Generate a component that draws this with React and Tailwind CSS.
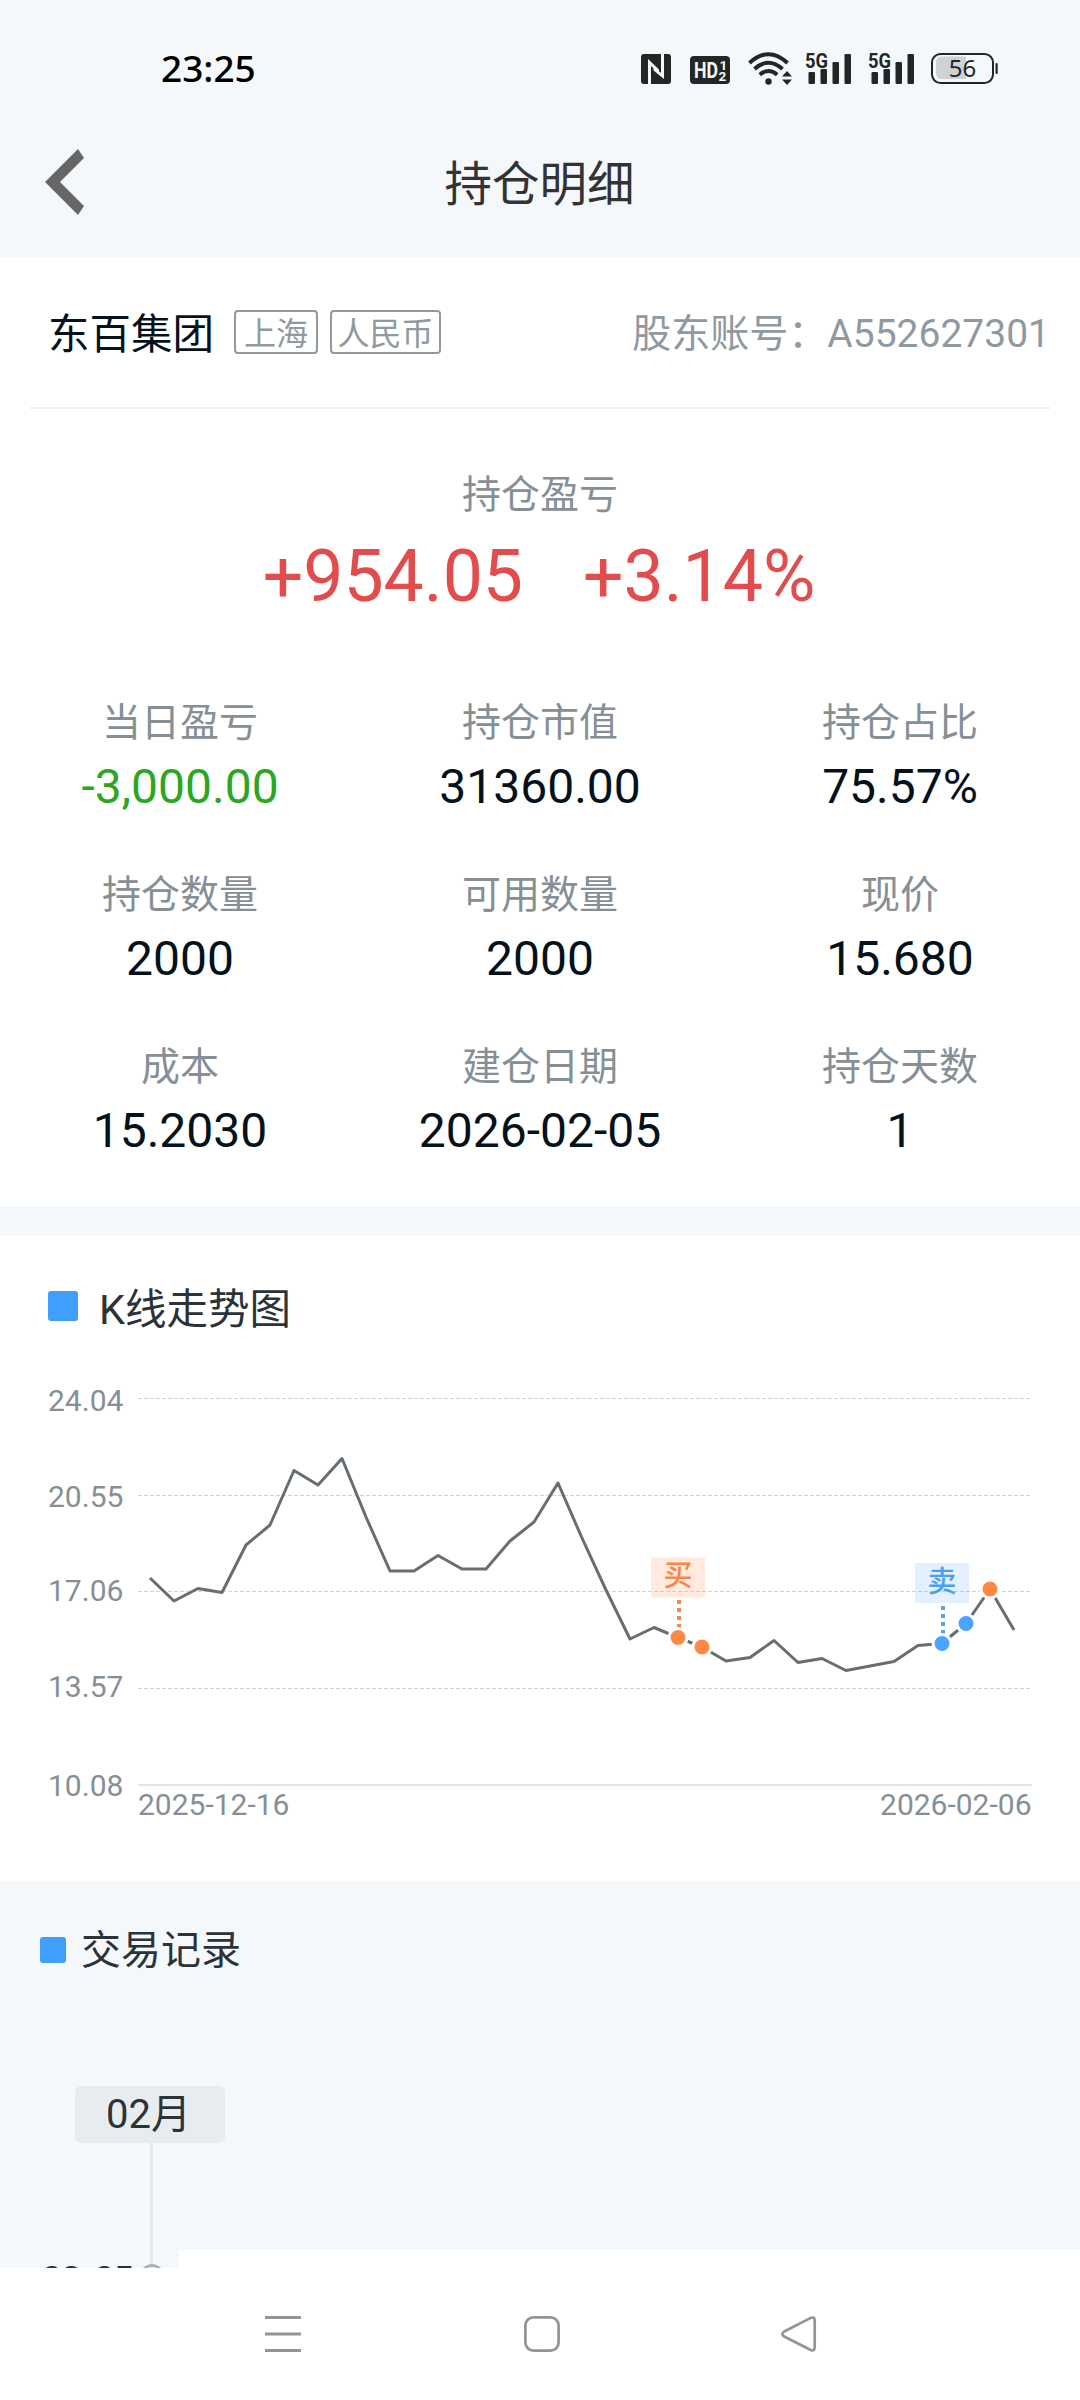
import React from 'react';

const stats = [
    { label: '当日盈亏', value: '-3,000.00', green: true },
    { label: '持仓市值', value: '31360.00' },
    { label: '持仓占比', value: '75.57%' },
    { label: '持仓数量', value: '2000' },
    { label: '可用数量', value: '2000' },
    { label: '现价', value: '15.680' },
    { label: '成本', value: '15.2030' },
    { label: '建仓日期', value: '2026-02-05' },
    { label: '持仓天数', value: '1' },
];

// y is the grid line, text is the label's baseline
const axis = [
    { label: '24.04', y: 28.5, text: 41 },
    { label: '20.55', y: 125.5, text: 137 },
    { label: '17.06', y: 221.5, text: 231 },
    { label: '13.57', y: 318.5, text: 327 },
    { label: '10.08', y: 415, text: 426 },
];

const closes = [
    208, 231, 218.5, 222.5, 175, 155, 100.5, 115, 88.5, 147, 201, 201, 185.5, 199, 199, 171, 152,
    113, 168, 220, 269, 257.5, 267.5, 277, 291, 287.5, 270.5, 292.5, 288.5, 300.5, 296, 291.5,
    275.5, 273.5, 253.5, 219, 260,
];

const pointX = (i) => 150 + i * 24;

const trades = [
    { i: 22, color: '#ff8844' },
    { i: 23, color: '#ff8844' },
    { i: 33, color: '#4aa3ff' },
    { i: 34, color: '#4aa3ff' },
    { i: 35, color: '#ff8844' },
];

const Signal = () => (
    <svg className="overflow-visible" width="47" height="34" viewBox="0 0 47 34" fill="#232625">
        <text x="0" y="16.5" fontSize="21" fontWeight="700" textLength="23" lengthAdjust="spacingAndGlyphs" className="font-['Roboto',sans-serif]">5G</text>
        <rect x="3.5" y="21" width="6.5" height="12" rx="1.2" />
        <rect x="15.5" y="18" width="6.5" height="15" rx="1.2" />
        <rect x="27.5" y="11" width="6.5" height="22" rx="1.2" />
        <rect x="39.5" y="3" width="6.5" height="30" rx="1.2" />
    </svg>
);

const StatusBar = () => (
    <div className="flex h-[110px] items-start justify-between pl-[161px] pr-[82px]">
        <span className="mt-[42px] font-['Noto_Sans',sans-serif] text-[37px] leading-[52px] font-medium text-black">23:25</span>
        <div className="mt-[52px] flex items-start">
            {/* NFC */}
            <svg className="mt-[2px]" width="30" height="30" viewBox="0 0 30 30">
                <rect width="30" height="30" rx="3" fill="#232625" />
                <path d="M7 30V5L18 15.500V19.500L10 12V30Z" fill="#f4f8fb" />
                <path d="M23 0V25L12.500 16.500V12.500L20 19V0Z" fill="#f4f8fb" />
            </svg>
            {/* HD */}
            <svg className="ml-[19px] mt-[4px]" width="40" height="28" viewBox="0 0 40 28">
                <rect width="40" height="28" rx="4" fill="#232625" />
                <g fill="#f4f8fb" fontWeight="700" className="font-['Roboto',sans-serif]">
                    <text x="4" y="21.5" fontSize="21.5" textLength="24" lengthAdjust="spacingAndGlyphs">HD</text>
                    <text x="29.5" y="13.5" fontSize="13.5">1</text>
                    <text x="28.5" y="24.8" fontSize="13.5">2</text>
                </g>
            </svg>
            {/* Wifi */}
            <svg className="ml-[18px]" width="44" height="33" viewBox="0 0 44 33">
                <g fill="none" stroke="#232625" strokeWidth="4">
                    <path d="M1.5 11Q20.5 -6.5 39.5 11" />
                    <path d="M6.5 17Q20.5 4.5 34.5 17" />
                    <path d="M11.8 22.7Q20.5 15.4 29.2 22.7" />
                </g>
                <circle cx="20.5" cy="29.5" r="3.2" fill="#232625" />
                <path d="M34 24.5L39 19L44 24.5ZM34 27.5L39 33L44 27.5Z" fill="#232625" />
            </svg>
            <div className="-mt-px ml-[13px] flex gap-4">
                <Signal />
                <Signal />
            </div>
            <svg className="ml-[16px]" width="67" height="33" viewBox="0 0 67 33">
                <path d="M35 4.5V27H11Q5 27 5 21V10.5Q5 4.500 11 4.5Z" fill="#cfd2d4" />
                <rect x="1" y="2" width="61" height="29" rx="8.5" fill="none" stroke="#232625" strokeWidth="2" />
                <rect x="64.5" y="11" width="2.2" height="11" rx="1" fill="#232625" />
                <text x="31.5" y="25" fontSize="24" textAnchor="middle" fill="#232625" className="font-['Noto_Sans',sans-serif]">56</text>
            </svg>
        </div>
    </div>
);

const Chart = () => (
    <svg className="block" width="1080" height="460" viewBox="0 0 1080 460">
        {axis.map((a, i) => (
            <g key={a.label}>
                <text x="48" y={a.text} fontSize="30" fill="#868f96">{a.label}</text>
                {i < 4 ? (
                    <line x1="138" x2="1030" y1={a.y} y2={a.y} stroke="#d0d5d8" strokeDasharray="4 2" />
                ) : (
                    <line x1="138" x2="1032" y1={a.y} y2={a.y} stroke="#e2e6eb" strokeWidth="2" />
                )}
            </g>
        ))}
        <text x="138" y="445" fontSize="30" fill="#868f96">2025-12-16</text>
        <text x="1031.5" y="445" fontSize="30" fill="#868f96" textAnchor="end">2026-02-06</text>

        <polyline
            points={closes.map((y, i) => `${pointX(i)},${y}`).join(' ')}
            fill="none"
            stroke="#666e74"
            strokeWidth="3"
            strokeLinejoin="round"
        />

        {/* Buy / sell flags */}
        <rect x="651" y="187.5" width="54" height="40" fill="#ff8844" fillOpacity="0.18" />
        <text x="678" y="216" fontSize="29" fontWeight="500" fill="#f5874a" textAnchor="middle">买</text>
        <line x1="679" x2="679" y1="230" y2="259" stroke="#f08a50" strokeWidth="4" strokeDasharray="4 4" />
        <rect x="915" y="193" width="54" height="40" fill="#4aa3ff" fillOpacity="0.16" />
        <text x="942" y="222" fontSize="29" fontWeight="500" fill="#4aa0f0" textAnchor="middle">卖</text>
        <line x1="943" x2="943" y1="236" y2="265" stroke="#55a5ea" strokeWidth="4" strokeDasharray="4 4" />

        {trades.map((t) => (
            <circle key={t.i} cx={pointX(t.i)} cy={closes[t.i]} r="9" fill={t.color} stroke="#ffffff" strokeWidth="3" />
        ))}
    </svg>
);

const App = () => {
    return (
        <div className="flex h-[2400px] w-[1080px] flex-col overflow-hidden bg-[#f4f8fb] font-['Roboto','Noto_Sans_CJK_SC',sans-serif]">
            <StatusBar />
            <header className="grid h-[147px] grid-cols-3 items-center pb-[3px]">
                <svg className="ml-[45px]" width="40" height="66" viewBox="0 0 40 66">
                    <path d="M33 0L0 33L33 66L39 57L15 33L39 9Z" fill="#666666" />
                </svg>
                <h1 className="pt-[5px] pr-px text-center text-[47.5px] leading-[66px] text-[#333333]">持仓明细</h1>
            </header>

            <section className="h-[949px] shrink-0 bg-white">
                <div className="mx-[30px] flex h-[152px] items-center border-b-2 border-[#edf0f1] pl-[18px]">
                    <span className="pt-[6px] text-[41.5px] leading-[60px] text-[#05121b]">东百集团</span>
                    <span className="ml-[20px] flex h-[44px] w-[84px] items-center justify-center rounded border-2 border-[#8f999f] pt-1 text-[32px] text-[#8f999f]">上海</span>
                    <span className="ml-[12px] flex h-[44px] w-[111px] items-center justify-center rounded border-2 border-[#8f999f] pt-1 text-[32px] whitespace-nowrap text-[#8f999f]">人民币</span>
                    <span className="ml-auto pt-[5px] text-[39px] whitespace-nowrap text-[#8f999f]">股东账号：A552627301</span>
                </div>

                <div className="flex flex-col items-center pt-[58px]">
                    <span className="text-[39px] leading-[56px] text-[#868f96]">持仓盈亏</span>
                    <div className="mt-[12px] flex gap-[60px] pr-[2px] text-[71.5px] leading-[84px] text-[#e24c4c]">
                        <span>+954.05</span>
                        <span>+3.14%</span>
                    </div>
                </div>

                <div className="mt-[76px] grid grid-cols-3">
                    {stats.map((s) => (
                        <div key={s.label} className="flex h-[172px] flex-col items-center">
                            <span className="text-[39px] leading-[56px] text-[#868f96]">{s.label}</span>
                            <span className={`mt-[8px] text-[48px] leading-[56px] ${s.green ? 'text-[#2ba71f]' : 'text-[#05121b]'}`}>{s.value}</span>
                        </div>
                    ))}
                </div>
            </section>

            <section className="mt-[30px] h-[645px] shrink-0 bg-white pt-[40px]">
                <div className="flex h-[60px] items-center pl-[48px]">
                    <span className="h-[30px] w-[30px] rounded-[3px] bg-[#409eff]" />
                    <h2 className="ml-[21px] pt-[7px] text-[41.5px] leading-[60px] text-[#2c3338]">K线走势图</h2>
                </div>
                <div className="mt-[34px]">
                    <Chart />
                </div>
            </section>

            <section className="h-[387px] shrink-0 overflow-hidden pt-[39px]">
                <div className="flex h-[60px] items-center pl-[40px]">
                    <span className="h-[26px] w-[26px] rounded-[3px] bg-[#409eff]" />
                    <h2 className="ml-[15px] pt-[2px] text-[40px] leading-[60px] text-[#2c3338]">交易记录</h2>
                </div>
                <div className="mt-[106px] ml-[75px] flex h-[57px] w-[150px] items-center rounded-md bg-[#e7ecef] pl-[31px]">
                    <span className="text-[40px] leading-[57px] text-[#2c3338]">02月</span>
                </div>
                <div className="ml-[150px] h-[107px] w-[3px] bg-[#e3e8eb]" />
                <div className="flex h-[60px] items-start">
                    <span className="mt-[3px] ml-[42px] w-[98px] text-[34px] leading-[50px] font-bold text-[#2c3338]">02-05</span>
                    <div className="w-[24px]">
                        <div className="ml-[10px] h-[14px] w-[3px] bg-[#e3e8eb]" />
                        <div className="h-[24px] w-[24px] rounded-full border-3 border-[#a9b2b6]" />
                    </div>
                    <div className="ml-[15px] h-[60px] flex-1 bg-white" />
                </div>
            </section>

            <nav className="flex h-[132px] shrink-0 justify-between bg-white pt-[48px] pr-[262px] pl-[264px]">
                <svg width="38" height="36" viewBox="0 0 38 36" stroke="#949494" strokeWidth="3">
                    <path d="M1 1.5H37M1 18H37M1 34.5H37" />
                </svg>
                <svg width="36" height="36" viewBox="0 0 36 36" fill="none" stroke="#949494" strokeWidth="2.7">
                    <rect x="1.4" y="1.4" width="33.2" height="33.2" rx="8" />
                </svg>
                <svg width="37" height="36" viewBox="0 0 37 36" fill="none" stroke="#949494" strokeWidth="2.7">
                    <path d="M3.2 15.5L29.7 1.9Q33.5 0.5 33.7 4V31.5Q33.5 35.5 29.7 33.9L3.2 20.5Q-0.5 18 3.2 15.5Z" />
                </svg>
            </nav>
        </div>
    );
};

export default App;
